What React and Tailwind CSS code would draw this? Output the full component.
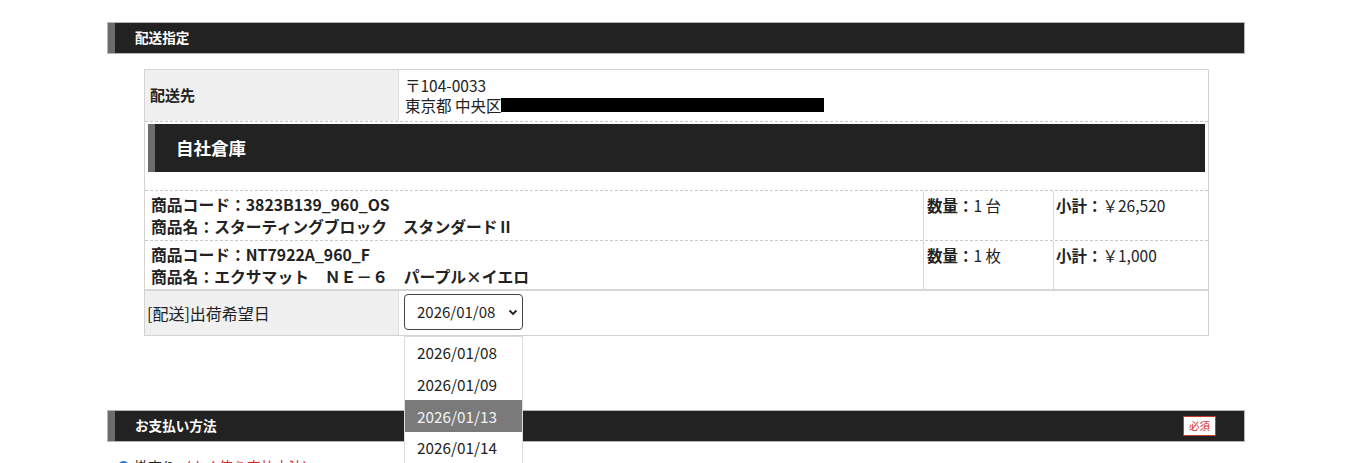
import React from "react";

const F = { fontFamily: '"Noto Sans CJK JP", "Noto Sans", sans-serif' };

function SectionBar({ title, badge }) {
  return (
    <div className="flex items-center h-[32px] bg-[#222222] border border-[#b5b5b5]">
      <div className="w-[7px] h-full bg-[#6b6b6b]" />
      <div className="pl-[20px] text-white font-bold text-[13.6px] leading-none flex-1">{title}</div>
      {badge && (
        <div className="mr-[28px] w-[33px] h-[20px] flex items-center justify-center bg-white border border-[#c0392b] text-[#d03030] text-[10.5px] leading-none">
          {badge}
        </div>
      )}
    </div>
  );
}

function ProductRow({ code, name, qty, sub, last }) {
  return (
    <div
      className={
        "flex h-[50px] " +
        (last ? "border-b-2 border-solid border-[#d6d6d6]" : "border-b border-dashed border-[#c8c8c8]")
      }
    >
      <div className="w-[778px] pl-[6px] pt-[3px] font-bold text-[15.8px] leading-[22px] text-[#222]">
        <div>{code}</div>
        <div>{name}</div>
      </div>
      <div className="w-[130px] border-l border-[#d6d6d6] pl-[3px] pt-[3px] font-bold text-[15.5px] leading-[22px] text-[#222]">
        数量：<span className="font-normal">{qty}</span>
      </div>
      <div className="flex-1 border-l border-[#d6d6d6] pl-[2px] pt-[3px] font-bold text-[15.5px] leading-[22px] text-[#222]">
        小計：<span className="font-normal">{sub}</span>
      </div>
    </div>
  );
}

export default function App() {
  const options = ["2026/01/08", "2026/01/09", "2026/01/13", "2026/01/14", "2026/01/15"];
  return (
    <div style={F} className="w-[1350px] h-[463px] overflow-hidden bg-white text-[#222]">
      <div className="w-[1138px] ml-[107px] pt-[22px]">
        <SectionBar title="配送指定" />

        <div className="ml-[37px] w-[1065px] mt-[15px] border border-[#d3d3d3] relative">
          {/* row 1 */}
          <div className="flex h-[52px] border-b border-dashed border-[#c8c8c8]">
            <div className="w-[254px] bg-[#f0f0f0] border-r border-[#dcdcdc] flex items-center pl-[5px] text-[15px] font-bold">
              配送先
            </div>
            <div className="flex-1 pl-[6px] pt-[5px] text-[15.5px] leading-[20px]">
              <div>〒104-0033</div>
              <div className="flex items-center">
                東京都 中央区
                <span className="inline-block w-[323px] h-[14px] bg-black" />
              </div>
            </div>
          </div>

          {/* warehouse */}
          <div className="px-[3px] pt-[2px] h-[69px] border-b border-dashed border-[#c8c8c8]">
            <div className="flex items-center h-[48px] bg-[#222222]">
              <div className="w-[7px] h-full bg-[#6b6b6b]" />
              <div className="pl-[21px] text-white font-bold text-[17.5px] leading-none">自社倉庫</div>
            </div>
          </div>

          <ProductRow
            code="商品コード：3823B139_960_OS"
            name="商品名：スターティングブロック　スタンダードⅡ"
            qty="1 台"
            sub="￥26,520"
          />
          <ProductRow
            code="商品コード：NT7922A_960_F"
            name="商品名：エクサマット　ＮＥ－６　パープル×イエロ"
            qty="1 枚"
            sub="￥1,000"
            last
          />

          {/* date row */}
          <div className="flex h-[44px]">
            <div className="w-[254px] bg-[#f0f0f0] border-r border-[#dcdcdc] flex items-center pl-[2px] text-[16px]">
              [配送]出荷希望日
            </div>
            <div className="flex-1 pl-[5px] pt-[3px] relative">
              <div className="w-[119px] h-[36px] border border-[#444] rounded-[4px] flex items-center pl-[12px] text-[15px] bg-white">
                <span className="flex-1">2026/01/08</span>
                <svg width="10" height="10" viewBox="0 0 10 10" className="mr-[4px]">
                  <path d="M1.5 3.5 L5 7 L8.5 3.5" fill="none" stroke="#222" strokeWidth="1.8" />
                </svg>
              </div>
              <div className="absolute left-[5px] top-[45px] w-[119px] bg-white border border-[#dcdcdc] z-10">
                {options.map((o, i) => (
                  <div
                    key={o}
                    className={
                      "h-[31.7px] flex items-center pl-[12px] text-[15.3px] " +
                      (i === 2 ? "bg-[#7a7a7a] text-[#f2f2f2]" : "text-[#222]")
                    }
                  >
                    {o}
                  </div>
                ))}
              </div>
            </div>
          </div>
        </div>

        <div className="mt-[74px]">
          <SectionBar title="お支払い方法" badge="必須" />
        </div>
        <div className="pl-[11px] pt-[14px] flex items-center gap-[4px] text-[14px] leading-[20px]">
          <span className="inline-block w-[11px] h-[11px] rounded-full border-2 border-[#2a6fd0]" />
          <span className="ml-[1px]">掛売り</span>
          <span className="ml-[6px] text-[#e02020]">(よく使う支払方法)</span>
        </div>
      </div>
    </div>
  );
}
